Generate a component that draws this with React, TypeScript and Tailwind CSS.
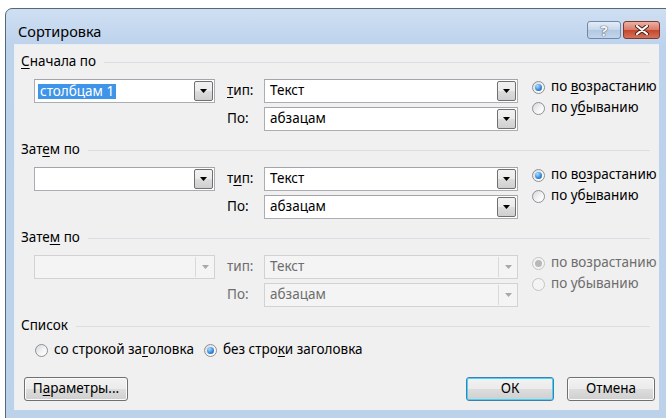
import React from "react";

type Mn = { text: string; at?: number };

// Renders a label with a Windows-style access key underline
function Mnemonic({ text, at }: Mn) {
  if (at === undefined || at < 0) return <>{text}</>;
  return (
    <>
      {text.slice(0, at)}
      <span className="underline underline-offset-[2px] decoration-[1px]">{text[at]}</span>
      {text.slice(at + 1)}
    </>
  );
}

function Arrow({ disabled }: { disabled?: boolean }) {
  return (
    <svg width="7" height="4" viewBox="0 0 7 4">
      <path d="M0 0 H7 L3.5 4 Z" fill={disabled ? "#a8a8a8" : "#000"} />
    </svg>
  );
}

function Combo({
  width,
  value,
  selected,
  disabled,
}: {
  width: string;
  value?: string;
  selected?: boolean;
  disabled?: boolean;
}) {
  if (disabled) {
    return (
      <div
        className={`${width} h-[24px] flex items-stretch border border-[#d2d2d2] bg-[#f4f4f4]`}
      >
        <div className="flex-1 flex items-center pl-[5px] text-[#6d6d6d]">{value}</div>
        <div className="w-[19px] border-l border-[#d9d9d9] my-[1px] flex items-center justify-center">
          <Arrow disabled />
        </div>
      </div>
    );
  }
  return (
    <div
      className={`${width} h-[24px] flex items-stretch border border-[#abadb3] border-t-[#a3a5ab] bg-white`}
    >
      <div className="flex-1 flex items-center pl-[3px]">
        {value !== undefined &&
          (selected ? (
            <span className="bg-[#3e94e8] text-white px-[2px] leading-[15px]">{value}</span>
          ) : (
            <span className="pl-[2px]">{value}</span>
          ))}
      </div>
      <div className="w-[19px] my-[1px] mr-[1px] rounded-[2px] border border-[#707070] bg-[linear-gradient(to_bottom,#f2f2f2,#ebebeb_50%,#dddddd_50%,#cfcfcf)] flex items-center justify-center">
        <Arrow />
      </div>
    </div>
  );
}

function Radio({
  checked,
  disabled,
  label,
}: {
  checked?: boolean;
  disabled?: boolean;
  label: React.ReactNode;
}) {
  return (
    <div className={`flex items-center h-[16px] gap-[6px] ${disabled ? "text-[#6d6d6d]" : ""}`}>
      <div
        className={`w-[13px] h-[13px] rounded-full border flex items-center justify-center ${
          disabled
            ? "border-[#c4c4c4] bg-[#f4f4f4]"
            : "border-[#8c8f94] bg-[linear-gradient(135deg,#d6d8da,#f6f6f6_60%,#ffffff)]"
        }`}
      >
        {checked && (
          <div
            className={`w-[7px] h-[7px] rounded-full ${
              disabled
                ? "bg-[#b8b8b8]"
                : "bg-[radial-gradient(circle_at_35%_30%,#a9dcff,#3a8ee0_55%,#173f8f)]"
            }`}
          />
        )}
      </div>
      <span>{label}</span>
    </div>
  );
}

function GroupLabel({ children }: { children: React.ReactNode }) {
  return (
    <div className="flex items-center h-[16px] gap-[8px] pr-[9px]">
      <span>{children}</span>
      <div className="flex-1 h-px bg-[#dadde1]" />
    </div>
  );
}

type SortRowProps = {
  title: React.ReactNode;
  column?: string;
  selected?: boolean;
  typeLabel: React.ReactNode;
  asc: React.ReactNode;
  desc: React.ReactNode;
  disabled?: boolean;
};

function SortGroup({ title, column, selected, typeLabel, asc, desc, disabled }: SortRowProps) {
  const lbl = disabled ? "text-[#6d6d6d]" : "";
  return (
    <div>
      <GroupLabel>{title}</GroupLabel>
      <div className="flex mt-[9px] pl-[13px]">
        <Combo width="w-[181px]" value={column} selected={selected} disabled={disabled} />
        <div className="ml-[12px] flex flex-col gap-[4px]">
          <div className="flex items-center">
            <span className={`w-[37px] ${lbl}`}>{typeLabel}</span>
            <Combo width="w-[254px]" value="Текст" disabled={disabled} />
          </div>
          <div className="flex items-center">
            <span className={`w-[37px] ${lbl}`}>По:</span>
            <Combo width="w-[254px]" value="абзацам" disabled={disabled} />
          </div>
        </div>
        <div className="ml-[14px] flex flex-col gap-[5px]">
          <Radio checked disabled={disabled} label={asc} />
          <Radio disabled={disabled} label={desc} />
        </div>
      </div>
    </div>
  );
}

function Button({
  children,
  width,
  primary,
}: {
  children: React.ReactNode;
  width: string;
  primary?: boolean;
}) {
  return (
    <div
      className={`${width} h-[24px] rounded-[3px] border flex items-center justify-center ${
        primary
          ? "border-[#3c7fb1] shadow-[inset_0_0_0_1px_#48d4f7] bg-[linear-gradient(to_bottom,#f2f2f2,#ebebeb_50%,#dddddd_50%,#cfcfcf)]"
          : "border-[#707070] shadow-[inset_0_0_0_1px_#fbfbfb] bg-[linear-gradient(to_bottom,#f2f2f2,#ebebeb_50%,#dddddd_50%,#cfcfcf)]"
      }`}
    >
      {children}
    </div>
  );
}

export default function App() {
  return (
    <div className="w-[666px] h-[418px] bg-white overflow-hidden pt-[8px] pl-[5px] text-[13.5px] text-black font-['Noto_Sans','DejaVu_Sans',sans-serif] leading-none">
      <div className="w-[670px] h-[420px] rounded-tl-[7px] border border-[#55677a] bg-[linear-gradient(to_bottom,#cfdff2,#bdd3ec_36px,#bcd2eb)] flex flex-col">
        {/* caption */}
        <div className="h-[35px] flex items-start pl-[12px] pr-[14px]">
          <span className="mt-[15px] text-[14.5px]">Сортировка</span>
          <div className="ml-auto mt-[12px] flex gap-[2px]">
            <div className="w-[34px] h-[18px] rounded-[3px] border border-[#7189a8] bg-[linear-gradient(to_bottom,#e4edf8,#c6d6ea_50%,#b2c7e1_50%,#c2d5ec)] flex items-center justify-center">
              <span className="text-[15px] font-bold text-[#f4f6f8] [text-shadow:0_0_1px_#3b4a5c,0_0_1px_#3b4a5c]">
                ?
              </span>
            </div>
            <div className="w-[37px] h-[18px] rounded-[3px] border border-[#83372a] bg-[linear-gradient(to_bottom,#eab1a5,#d97a66_50%,#c6432b_50%,#d2735c)] flex items-center justify-center">
              <svg width="14" height="10" viewBox="0 0 14 10">
                <path d="M2 1 L12 9 M12 1 L2 9" stroke="#4a2018" strokeWidth="4" strokeLinecap="round" />
                <path d="M2 1 L12 9 M12 1 L2 9" stroke="#ffffff" strokeWidth="2.2" strokeLinecap="round" />
              </svg>
            </div>
          </div>
        </div>

        {/* client area */}
        <div className="ml-[8px] w-[645px] h-[366px] bg-[#f0f0f0] border-t border-l border-[#e9eef4] pl-[6px] pt-[9px] flex flex-col">
          <SortGroup
            title={<Mnemonic text="Сначала по" at={0} />}
            column="столбцам 1"
            selected
            typeLabel={<Mnemonic text="тип:" at={0} />}
            asc={<Mnemonic text="по возрастанию" at={3} />}
            desc={<Mnemonic text="по убыванию" at={4} />}
          />
          <div className="mt-[11px]">
            <SortGroup
              title={<Mnemonic text="Затем по" at={3} />}
              column=""
              typeLabel={<Mnemonic text="тип:" at={1} />}
              asc={<Mnemonic text="по возрастанию" at={4} />}
              desc={<Mnemonic text="по убыванию" at={5} />}
            />
          </div>
          <div className="mt-[11px]">
            <SortGroup
              title={<Mnemonic text="Затем по" at={4} />}
              typeLabel="тип:"
              asc="по возрастанию"
              desc="по убыванию"
              disabled
            />
          </div>

          <div className="mt-[11px]">
            <GroupLabel>Список</GroupLabel>
            <div className="mt-[8px] pl-[14px] flex items-center gap-[10px]">
              <Radio label={<Mnemonic text="со строкой заголовка" at={13} />} />
              <Radio checked label={<Mnemonic text="без строки заголовка" at={8} />} />
            </div>
          </div>

          <div className="mt-[19px] flex items-center pl-[3px] pr-[4px]">
            <Button width="w-[104px]">
              <Mnemonic text="Параметры..." at={1} />
            </Button>
            <div className="ml-auto flex gap-[13px]">
              <Button width="w-[88px]" primary>
                ОК
              </Button>
              <Button width="w-[88px]">Отмена</Button>
            </div>
          </div>
        </div>
      </div>
    </div>
  );
}
